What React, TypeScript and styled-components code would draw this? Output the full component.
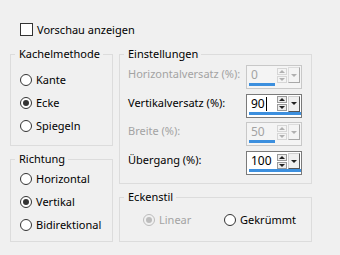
import React from "react";
import styled, { createGlobalStyle } from "styled-components";

const GlobalStyle = createGlobalStyle`
  html, body {
    margin: 0;
    padding: 0;
    background: #f0f0f0;
  }
  body {
    font-family: "Noto Sans", "Open Sans", sans-serif;
    font-size: 11px;
    color: #000;
  }
`;

const Window = styled.div`
  width: 340px;
  height: 255px;
  box-sizing: border-box;
  padding: 23px 0 0 10px;
  display: flex;
  flex-direction: column;
  overflow: hidden;
`;

const CheckRow = styled.label`
  display: flex;
  align-items: center;
  gap: 4px;
  margin-left: 10px;
  height: 13px;
  line-height: 13px;
`;

const CheckBox = styled.span`
  width: 13px;
  height: 13px;
  box-sizing: border-box;
  border: 1px solid #333;
  background: #fff;
`;

const Columns = styled.div`
  display: flex;
  gap: 6px;
  margin-top: 10px;
`;

const Column = styled.div<{ $width: number }>`
  width: ${(p) => p.$width}px;
  display: flex;
  flex-direction: column;
  gap: 5px;
`;

const Group = styled.fieldset<{ $height: number }>`
  margin: 0;
  padding: 0;
  min-width: 0;
  box-sizing: border-box;
  height: ${(p) => p.$height}px;
  border: 1px solid #dcdcdc;
`;

const Legend = styled.legend`
  margin-left: 4px;
  padding: 0 3px 0 4px;
  line-height: 16px;
`;

const RadioList = styled.div<{ $top: number; $left?: number }>`
  display: flex;
  flex-direction: column;
  padding: ${(p) => p.$top}px 0 0 ${(p) => p.$left ?? 9}px;
`;

const RadioRow = styled.div<{ $disabled?: boolean }>`
  display: flex;
  align-items: center;
  gap: 4px;
  height: 23px;
  white-space: nowrap;
  color: ${(p) => (p.$disabled ? "#a3a3a3" : "#000")};
`;

const RadioDot = styled.span<{ $checked?: boolean; $disabled?: boolean }>`
  position: relative;
  flex: none;
  width: 12px;
  height: 12px;
  box-sizing: border-box;
  border-radius: 50%;
  border: 1px solid ${(p) => (p.$disabled ? "#bcbcbc" : "#333")};
  background: ${(p) => (p.$disabled ? "#f0f0f0" : "#fff")};

  &::after {
    content: "";
    display: ${(p) => (p.$checked ? "block" : "none")};
    position: absolute;
    left: 2px;
    top: 2px;
    width: 6px;
    height: 6px;
    border-radius: 50%;
    background: ${(p) => (p.$disabled ? "#bcbcbc" : "#333")};
  }
`;

const Settings = styled.div`
  display: flex;
  flex-direction: column;
  gap: 4.7px;
  padding: 3px 9px 0 8px;
`;

const FieldRow = styled.div`
  display: flex;
  align-items: flex-start;
  height: 24px;
`;

const FieldLabel = styled.span<{ $disabled?: boolean }>`
  flex: 1;
  white-space: nowrap;
  line-height: 16px;
  padding-top: 1px;
  color: ${(p) => (p.$disabled ? "#a3a3a3" : "#000")};
`;

const SpinBox = styled.div<{ $disabled?: boolean }>`
  flex: none;
  width: 56px;
  height: 24px;
  box-sizing: border-box;
  padding: 1px 1px 2px 1px;
  border: 1px solid ${(p) => (p.$disabled ? "#c8c8c8" : "#7a7a7a")};
  background: ${(p) => (p.$disabled ? "#f4f4f4" : "#fff")};
  display: flex;
  flex-direction: column;
`;

const SpinTop = styled.div`
  display: flex;
  align-items: center;
  height: 16px;
`;

const SpinValue = styled.span<{ $disabled?: boolean }>`
  flex: 1;
  display: flex;
  align-items: center;
  padding-left: 3px;
  font-size: 12px;
  line-height: 16px;
  color: ${(p) => (p.$disabled ? "#a3a3a3" : "#000")};
`;

const Caret = styled.span`
  width: 1px;
  height: 14px;
  background: #000;
  margin-left: 1px;
`;

const Steppers = styled.div`
  width: 10px;
  display: flex;
  flex-direction: column;
  gap: 1px;
`;

const StepButton = styled.span<{ $down?: boolean; $disabled?: boolean }>`
  height: 7px;
  box-sizing: border-box;
  border: 1px solid ${(p) => (p.$disabled ? "#d6d6d6" : "#9a9a9a")};
  background: ${(p) => (p.$disabled ? "#f4f4f4" : "#ececec")};
  display: flex;
  align-items: center;
  justify-content: center;

  &::after {
    content: "";
    border-left: 3px solid transparent;
    border-right: 3px solid transparent;
    ${(p) => (p.$down ? "border-top" : "border-bottom")}: 3px solid
      ${(p) => (p.$disabled ? "#b0b0b0" : "#222")};
  }
`;

const DropButton = styled.span<{ $disabled?: boolean }>`
  width: 12px;
  height: 16px;
  margin-left: 1px;
  box-sizing: border-box;
  border: 1px solid ${(p) => (p.$disabled ? "#dcdcdc" : "#cfcfcf")};
  border-right-color: ${(p) => (p.$disabled ? "#a8a8a8" : "#555")};
  border-bottom-color: ${(p) => (p.$disabled ? "#a8a8a8" : "#555")};
  background: ${(p) => (p.$disabled ? "#f4f4f4" : "#f0f0f0")};
  display: flex;
  align-items: center;
  justify-content: center;

  &::after {
    content: "";
    border-left: 3px solid transparent;
    border-right: 3px solid transparent;
    border-top: 3px solid ${(p) => (p.$disabled ? "#b0b0b0" : "#222")};
  }
`;

const ValueBar = styled.div<{ $width: number }>`
  width: ${(p) => p.$width}px;
  height: 3px;
  margin-left: 1px;
  background: #3c8fde;
`;

const StyleRow = styled.div`
  display: grid;
  grid-template-columns: 81px auto;
  padding: 3px 0 0 23px;
`;

type Spin = { label: string; value: string; disabled?: boolean; caret?: boolean };

const spins: Spin[] = [
  { label: "Horizontalversatz (%):", value: "0", disabled: true },
  { label: "Vertikalversatz (%):", value: "90", caret: true },
  { label: "Breite (%):", value: "50", disabled: true },
  { label: "Übergang (%):", value: "100" },
];

const Radio = ({
  label,
  checked,
  disabled,
}: {
  label: string;
  checked?: boolean;
  disabled?: boolean;
}) => (
  <RadioRow $disabled={disabled}>
    <RadioDot $checked={checked} $disabled={disabled} />
    <span>{label}</span>
  </RadioRow>
);

const SpinField = ({ label, value, disabled, caret }: Spin) => (
  <FieldRow>
    <FieldLabel $disabled={disabled}>{label}</FieldLabel>
    <SpinBox $disabled={disabled}>
      <SpinTop>
        <SpinValue $disabled={disabled}>
          {value}
          {caret && <Caret />}
        </SpinValue>
        <Steppers>
          <StepButton $disabled={disabled} />
          <StepButton $down $disabled={disabled} />
        </Steppers>
        <DropButton $disabled={disabled} />
      </SpinTop>
      <ValueBar $width={disabled ? 26 : 52} />
    </SpinBox>
  </FieldRow>
);

export default function App() {
  return (
    <>
      <GlobalStyle />
      <Window>
        <CheckRow>
          <CheckBox />
          <span>Vorschau anzeigen</span>
        </CheckRow>
        <Columns>
          <Column $width={103}>
            <Group $height={100}>
              <Legend>Kachelmethode</Legend>
              <RadioList $top={6}>
                <Radio label="Kante" />
                <Radio label="Ecke" checked />
                <Radio label="Spiegeln" />
              </RadioList>
            </Group>
            <Group $height={91}>
              <Legend>Richtung</Legend>
              <RadioList $top={0}>
                <Radio label="Horizontal" />
                <Radio label="Vertikal" checked />
                <Radio label="Bidirektional" />
              </RadioList>
            </Group>
          </Column>
          <Column $width={193}>
            <Group $height={138}>
              <Legend>Einstellungen</Legend>
              <Settings>
                {spins.map((s) => (
                  <SpinField key={s.label} {...s} />
                ))}
              </Settings>
            </Group>
            <Group $height={53}>
              <Legend>Eckenstil</Legend>
              <StyleRow>
                <Radio label="Linear" checked disabled />
                <Radio label="Gekrümmt" />
              </StyleRow>
            </Group>
          </Column>
        </Columns>
      </Window>
    </>
  );
}
